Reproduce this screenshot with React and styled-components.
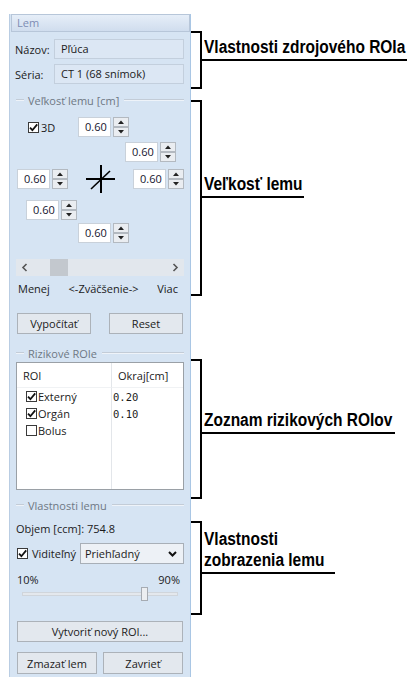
import React from "react";
import styled, { createGlobalStyle } from "styled-components";

const GlobalStyle = createGlobalStyle`
  body {
    margin: 0;
    background: #fff;
  }
`;

const Page = styled.div`
  display: flex;
  align-items: flex-start;
  height: 677px;
  overflow: hidden;
`;

const Panel = styled.div`
  box-sizing: border-box;
  margin: 14px 0 0 9px;
  width: 182px;
  height: 663px;
  background: #d6e4f3;
  border-left: 1px solid #b9cde3;
  border-right: 1px solid #a9c6e4;
  font-family: "Open Sans", "Noto Sans", sans-serif;
  font-size: 11px;
  color: #1b1b1b;
`;

const Header = styled.div`
  box-sizing: border-box;
  margin-left: 1px;
  height: 18px;
  padding-left: 5px;
  line-height: 16px;
  color: #7d8db4;
  border: 1px solid #b7c6d9;
  background: linear-gradient(#e6eef8, #d0ddee);
`;

const Body = styled.div`
  padding: 0 6px;
`;

const FieldRow = styled.div`
  display: flex;
  align-items: center;
  height: 20px;
  margin-top: ${(p) => p.$mt}px;
`;

const FieldLabel = styled.span`
  width: 39px;
  margin-left: -1px;
`;

const Field = styled.div`
  box-sizing: border-box;
  flex: 1;
  height: 100%;
  padding-left: 6px;
  line-height: 18px;
  background: #dce7f4;
  border: 1px solid #c3cfdd;
`;

const Legend = styled.div`
  display: flex;
  align-items: center;
  height: 14px;
  margin-top: ${(p) => p.$mt}px;
  color: #6e7884;

  &::before,
  &::after {
    content: "";
    height: 0;
    border-top: 1px solid #c3ccd7;
    border-bottom: 1px solid #eef3f9;
  }
  &::before {
    width: 8px;
    margin-right: 4px;
  }
  &::after {
    flex: 1;
    margin-left: 5px;
  }
`;

const SpinRow = styled.div`
  display: flex;
  align-items: center;
  justify-content: ${(p) => (p.$spread ? "space-between" : "flex-start")};
  height: 20px;
  margin-top: ${(p) => p.$mt}px;
  padding-left: ${(p) => p.$pl}px;
`;

const SpinWrap = styled.div`
  display: flex;
  height: 20px;
`;

const SpinInput = styled.div`
  box-sizing: border-box;
  width: 33px;
  height: 20px;
  padding-left: 6px;
  line-height: 18px;
  background: #fff;
  border: 1px solid #c9d1da;
  color: #15152e;
`;

const SpinBtns = styled.div`
  display: flex;
  flex-direction: column;
  margin-left: 2px;
`;

const SpinBtn = styled.span`
  box-sizing: border-box;
  width: 16px;
  height: 10px;
  display: flex;
  align-items: center;
  justify-content: center;
  background: #eaedf1;
  border: 1px solid #b3b9c0;
`;

const CheckGroup = styled.label`
  display: flex;
  align-items: center;
  gap: ${(p) => p.$gap ?? 2}px;
  width: ${(p) => (p.$w ? `${p.$w}px` : "auto")};
  flex-shrink: 0;
`;

const Box = styled.span`
  box-sizing: border-box;
  width: 11px;
  height: 11px;
  display: inline-flex;
  align-items: center;
  justify-content: center;
  background: #fff;
  border: 1px solid #3a3a3a;
  flex-shrink: 0;
`;

const Scroll = styled.div`
  display: flex;
  align-items: center;
  height: 17px;
  margin-top: 16px;
  background: #e2e7ed;
`;

const ScrollArrow = styled.span`
  width: 17px;
  height: 17px;
  display: flex;
  align-items: center;
  justify-content: center;
`;

const Lane = styled.div`
  flex: 1;
  height: 100%;
  display: flex;
`;

const Thumb = styled.div`
  width: 18px;
  height: 100%;
  background: #c3c8ce;
`;

const SpreadRow = styled.div`
  display: flex;
  justify-content: space-between;
  align-items: center;
  height: 14px;
  margin-top: ${(p) => p.$mt}px;
  padding: ${(p) => p.$pad || "0"};
`;

const ButtonRow = styled.div`
  display: flex;
  justify-content: space-between;
  margin-top: ${(p) => p.$mt}px;
  padding: 0 1px;
`;

const Button = styled.button`
  box-sizing: border-box;
  width: ${(p) => (p.$w ? `${p.$w}px` : "100%")};
  height: ${(p) => p.$h || 21}px;
  padding: 0;
  font: inherit;
  color: #1b1b1b;
  background: #e3e8ee;
  border: 1px solid #acb2b9;
`;

const List = styled.div`
  box-sizing: border-box;
  height: 128px;
  margin-top: 2px;
  background: #fff;
  border: 1px solid #9aa0a6;
  display: grid;
  grid-template-columns: 95px 1fr;
  grid-template-rows: 25px repeat(3, 17px) 1fr;
`;

const Cell = styled.div`
  display: flex;
  align-items: center;
  padding-left: ${(p) => p.$pl ?? 0}px;
  border-right: ${(p) => (p.$first ? "1px solid #e3e6ea" : "none")};
  border-bottom: ${(p) => (p.$head ? "1px solid #f0f2f4" : "none")};
  font-family: ${(p) => (p.$mono ? '"DejaVu Sans Mono", "Liberation Mono", monospace' : "inherit")};
  font-size: ${(p) => (p.$mono ? "10.5px" : "inherit")};
`;

const InfoLine = styled.div`
  height: 14px;
  line-height: 14px;
  margin-top: ${(p) => p.$mt}px;
`;

const VisibleRow = styled.div`
  display: flex;
  align-items: center;
  height: 21px;
  margin-top: 7px;
  padding-left: 1px;
`;

const Select = styled.div`
  box-sizing: border-box;
  flex: 1;
  height: 21px;
  margin-left: 4px;
  padding: 0 6px 0 4px;
  display: flex;
  align-items: center;
  justify-content: space-between;
  background: #edf1f6;
  border: 1px solid #a8afb7;
`;

const Slider = styled.div`
  position: relative;
  height: 14px;
  margin: 1px 6px 0 6px;
  display: flex;
  align-items: center;
`;

const Track = styled.div`
  box-sizing: border-box;
  width: 100%;
  height: 4px;
  background: #e4e8ed;
  border: 1px solid #d0d5db;
`;

const SliderThumb = styled.div`
  position: absolute;
  top: 0;
  box-sizing: border-box;
  width: 7px;
  height: 14px;
  background: #eceef1;
  border: 1px solid #a6abb2;
`;

const Notes = styled.div`
  display: flex;
  flex-direction: column;
  font-family: "Liberation Sans", Arial, sans-serif;
  font-weight: 700;
  font-size: 18px;
  color: #000;
`;

const Callout = styled.div`
  display: flex;
  align-items: flex-start;
  margin-top: ${(p) => p.$mt}px;
  height: ${(p) => p.$h}px;
`;

const Brace = styled.div`
  box-sizing: border-box;
  width: 11px;
  height: 100%;
  border: 2px solid #000;
  border-left: none;
`;

const Tag = styled.div`
  box-sizing: border-box;
  width: ${(p) => p.$w}px;
  height: ${(p) => p.$line}px;
  margin-left: -2px;
  padding: 0 0 1px 4px;
  display: flex;
  align-items: flex-end;
  line-height: 21px;
  border-bottom: 2px solid #000;
  white-space: nowrap;
`;

/* the reference uses a narrow face; squeeze the regular one to its width */
const TagText = styled.span`
  display: inline-block;
  transform: scaleX(0.86);
  transform-origin: left bottom;
`;

function Check({ checked }) {
  return (
    <Box>
      {checked && (
        <svg width="9" height="9" viewBox="0 0 9 9">
          <path d="M1 4.6 L3.4 7.2 L8.2 1.4" stroke="#111" strokeWidth="1.8" fill="none" />
        </svg>
      )}
    </Box>
  );
}

function Tri({ up }) {
  return (
    <svg width="6" height="4" viewBox="0 0 6 4">
      <path d={up ? "M0 4 L3 0.5 L6 4 Z" : "M0 0 L3 3.5 L6 0 Z"} fill="#222" />
    </svg>
  );
}

function Spinner({ value = "0.60" }) {
  return (
    <SpinWrap>
      <SpinInput>{value}</SpinInput>
      <SpinBtns>
        <SpinBtn><Tri up /></SpinBtn>
        <SpinBtn><Tri /></SpinBtn>
      </SpinBtns>
    </SpinWrap>
  );
}

function Crosshair() {
  return (
    <svg width="30" height="30" viewBox="0 0 30 30">
      <g stroke="#000" strokeWidth="2" fill="none">
        <path d="M0 15 H29" />
        <path d="M15 1 V29" />
        <path d="M5 25 L24 7" strokeWidth="1.6" />
      </g>
    </svg>
  );
}

function Chevron({ dir }) {
  return (
    <svg width="7" height="9" viewBox="0 0 7 9">
      <path d={dir === "left" ? "M5.5 1 L2 4.5 L5.5 8" : "M1.5 1 L5 4.5 L1.5 8"} stroke="#555" strokeWidth="1.6" fill="none" />
    </svg>
  );
}

const risks = [
  { name: "Externý", margin: "0.20", on: true },
  { name: "Orgán", margin: "0.10", on: true },
  { name: "Bolus", margin: "", on: false },
];

export default function App() {
  return (
    <Page>
      <GlobalStyle />
      <Panel>
        <Header>Lem</Header>
        <Body>
          <FieldRow $mt={7}>
            <FieldLabel>Názov:</FieldLabel>
            <Field>Pľúca</Field>
          </FieldRow>
          <FieldRow $mt={5}>
            <FieldLabel>Séria:</FieldLabel>
            <Field>CT 1 (68 snímok)</Field>
          </FieldRow>

          <Legend $mt={9}>Veľkosť lemu [cm]</Legend>
          <SpinRow $mt={10} $pl={12}>
            <CheckGroup $w={50}>
              <Check checked />
              <span>3D</span>
            </CheckGroup>
            <Spinner />
          </SpinRow>
          <SpinRow $mt={5} $pl={109}>
            <Spinner />
          </SpinRow>
          <SpinRow $mt={7} $pl={1} $spread>
            <Spinner />
            <Crosshair />
            <Spinner />
          </SpinRow>
          <SpinRow $mt={11} $pl={10}>
            <Spinner />
          </SpinRow>
          <SpinRow $mt={3} $pl={62}>
            <Spinner />
          </SpinRow>

          <Scroll>
            <ScrollArrow><Chevron dir="left" /></ScrollArrow>
            <Lane>
              <Thumb style={{ marginLeft: 17 }} />
            </Lane>
            <ScrollArrow><Chevron dir="right" /></ScrollArrow>
          </Scroll>
          <SpreadRow $mt={5} $pad="0 6px 0 2px">
            <span>Menej</span>
            <span>&lt;-Zväčšenie-&gt;</span>
            <span>Viac</span>
          </SpreadRow>
          <ButtonRow $mt={18}>
            <Button $w={74}>Vypočítať</Button>
            <Button $w={74}>Reset</Button>
          </ButtonRow>

          <Legend $mt={12}>Rizikové ROIe</Legend>
          <List>
            <Cell $first $head $pl={6}>ROI</Cell>
            <Cell $head $pl={6}>Okraj[cm]</Cell>
            {risks.map((r) => (
              <React.Fragment key={r.name}>
                <Cell $first $pl={9}>
                  <CheckGroup $gap={1}>
                    <Check checked={r.on} />
                    <span>{r.name}</span>
                  </CheckGroup>
                </Cell>
                <Cell $mono $pl={1}>{r.margin}</Cell>
              </React.Fragment>
            ))}
            <Cell $first />
            <Cell />
          </List>

          <Legend $mt={8}>Vlastnosti lemu</Legend>
          <InfoLine $mt={10}>Objem [ccm]: 754.8</InfoLine>
          <VisibleRow>
            <CheckGroup $gap={4}>
              <Check checked />
              <span>Viditeľný</span>
            </CheckGroup>
            <Select>
              <span>Priehľadný</span>
              <svg width="9" height="6" viewBox="0 0 9 6">
                <path d="M1 1 L4.5 4.5 L8 1" stroke="#111" strokeWidth="2" fill="none" />
              </svg>
            </Select>
          </VisibleRow>
          <SpreadRow $mt={8} $pad="0 4px 0 1px">
            <span>10%</span>
            <span>90%</span>
          </SpreadRow>
          <Slider>
            <Track />
            <SliderThumb style={{ left: `${0.76 * 100}%` }} />
          </Slider>
          <ButtonRow $mt={20}>
            <Button>Vytvoriť nový ROI...</Button>
          </ButtonRow>
          <ButtonRow $mt={10}>
            <Button $w={80} $h={22}>Zmazať lem</Button>
            <Button $w={80} $h={22}>Zavrieť</Button>
          </ButtonRow>
        </Body>
      </Panel>

      <Notes>
        <Callout $mt={31} $h={58}>
          <Brace />
          <Tag $line={30} $w={207}>
            <TagText>Vlastnosti zdrojového ROIa</TagText>
          </Tag>
        </Callout>
        <Callout $mt={11} $h={196}>
          <Brace />
          <Tag $line={98} $w={104}>
            <TagText>Veľkosť lemu</TagText>
          </Tag>
        </Callout>
        <Callout $mt={63} $h={140}>
          <Brace />
          <Tag $line={75} $w={195}>
            <TagText>Zoznam rizikových ROIov</TagText>
          </Tag>
        </Callout>
        <Callout $mt={22} $h={94}>
          <Brace />
          <Tag $line={53} $w={135}>
            <TagText>
              Vlastnosti
              <br />
              zobrazenia lemu
            </TagText>
          </Tag>
        </Callout>
      </Notes>
    </Page>
  );
}
